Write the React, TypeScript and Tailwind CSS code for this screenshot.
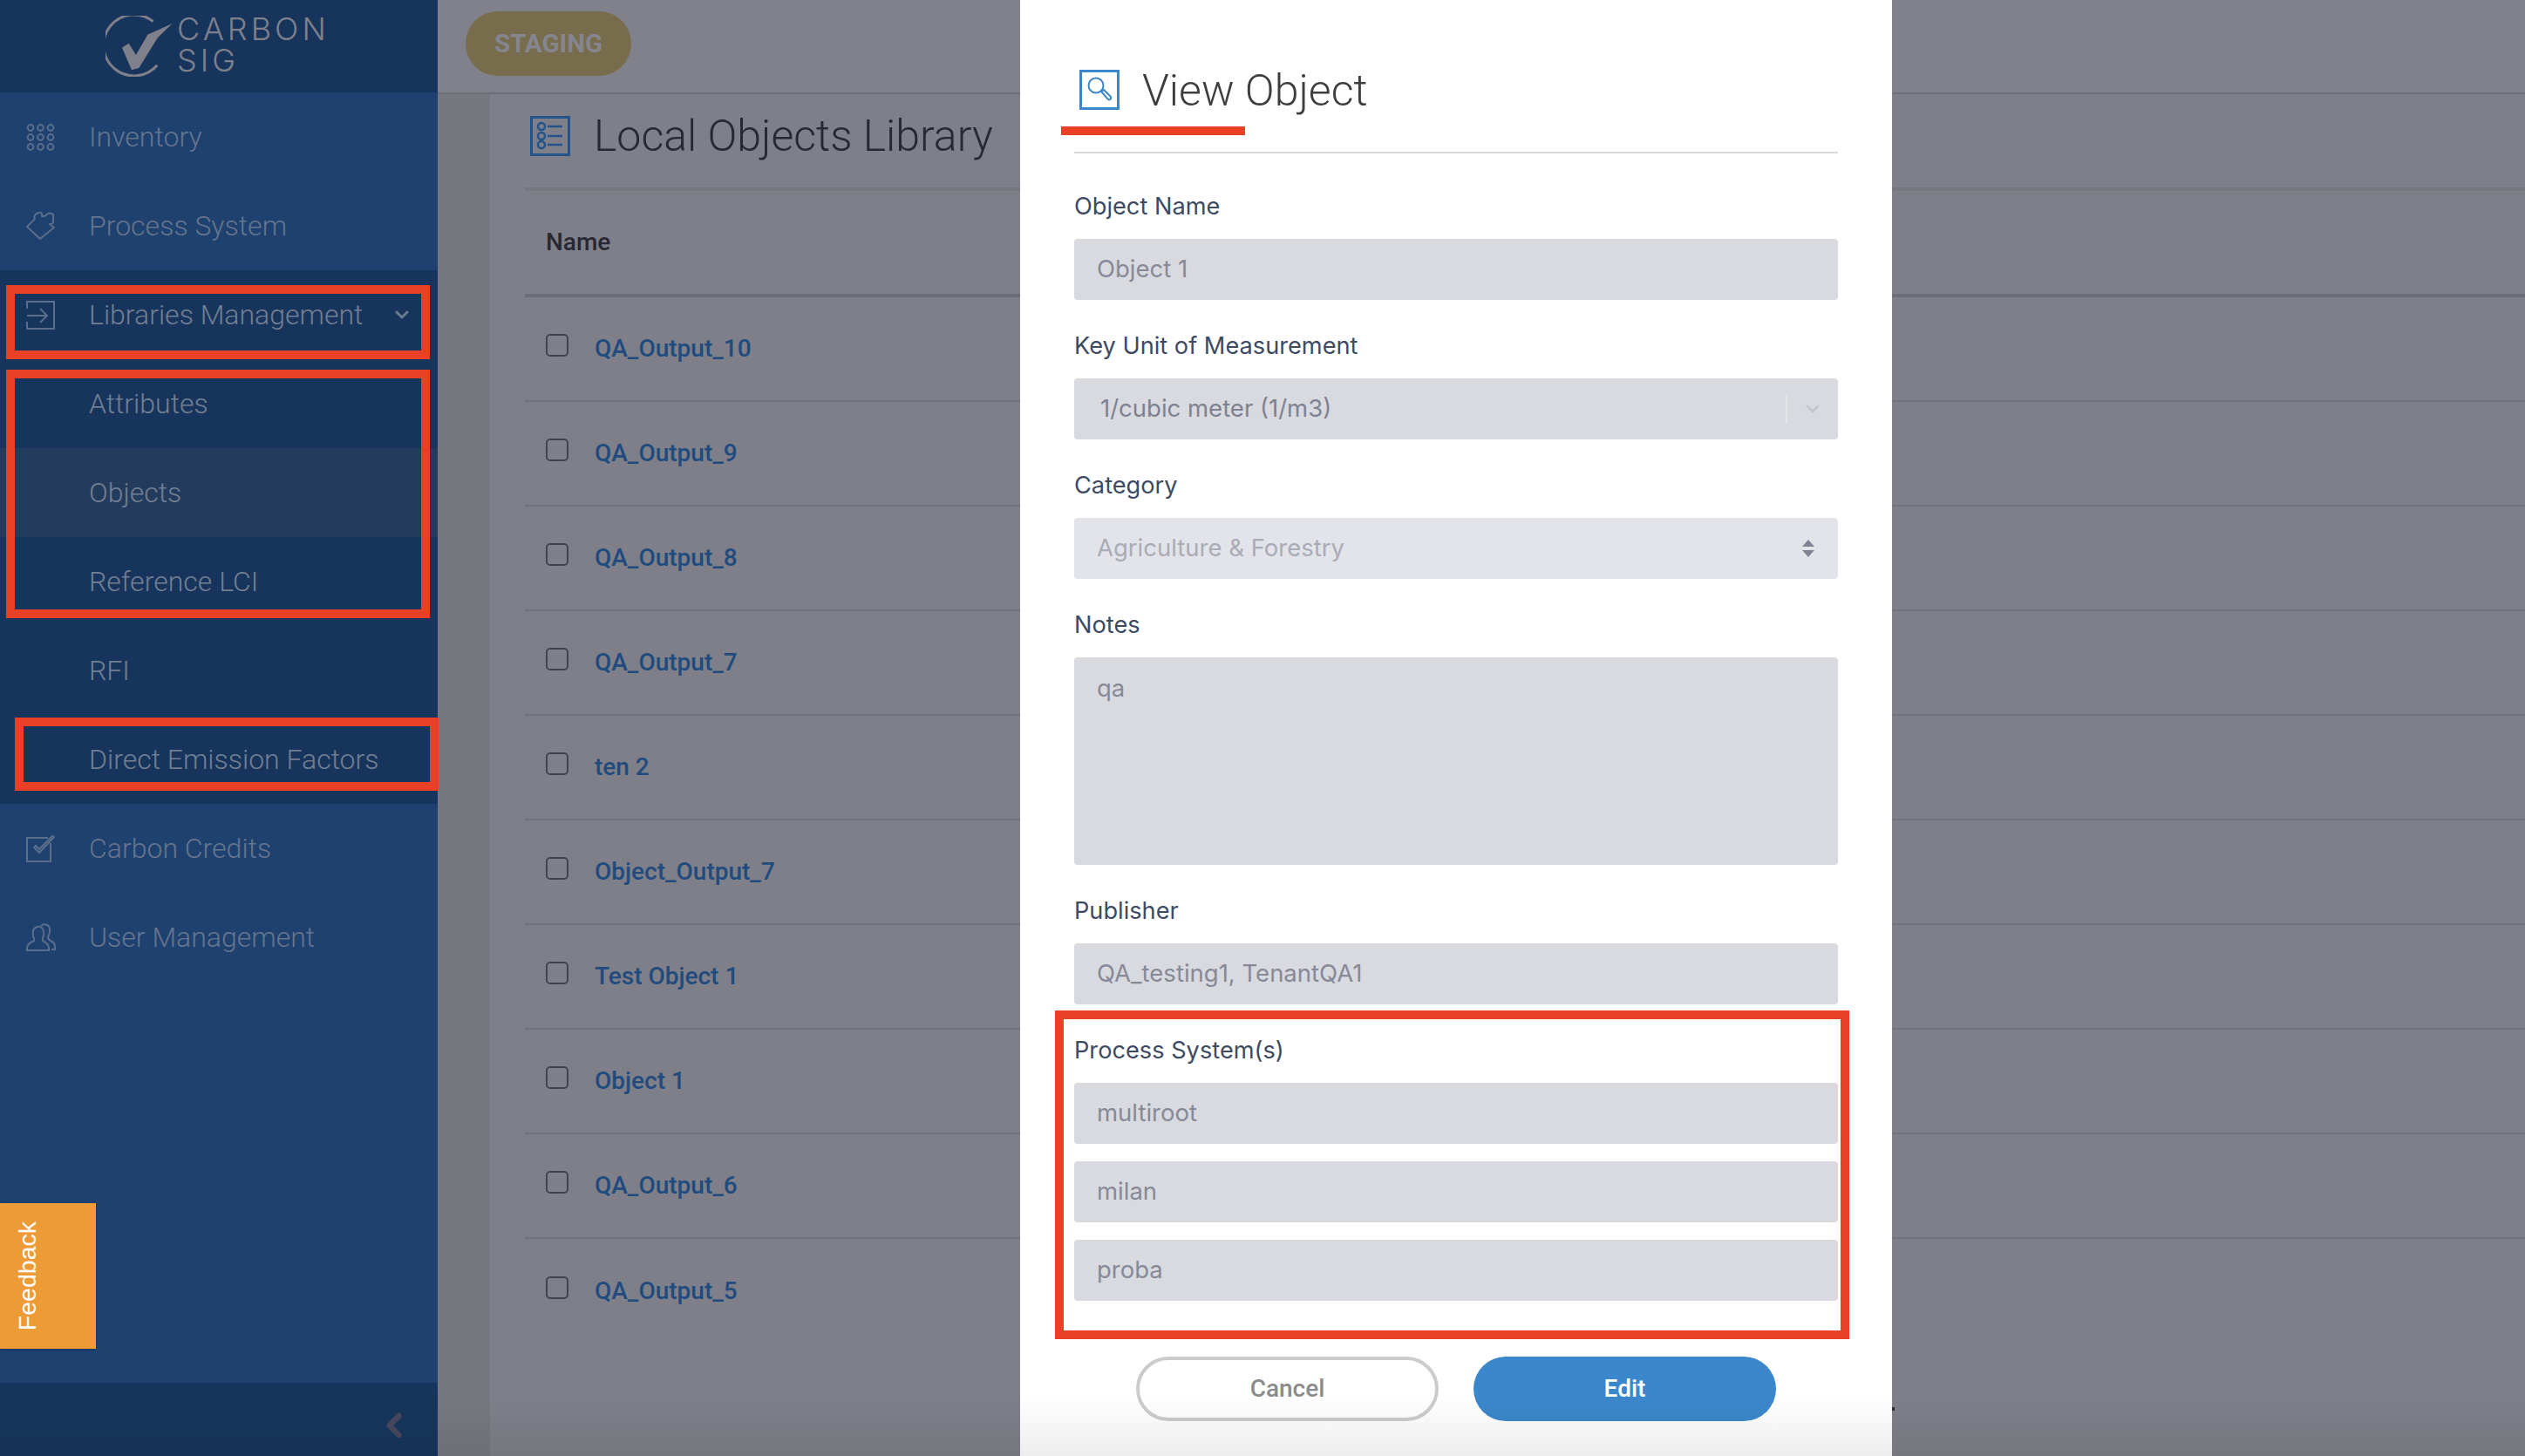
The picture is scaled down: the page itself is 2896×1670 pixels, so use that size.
import { ChevronDown, ChevronLeft } from 'lucide-react';

const RedBox = ({ className }: { className: string }) => (
  <div className={`pointer-events-none absolute border-[10px] border-[#ea4025] ${className}`} />
);

const GridIcon = () => (
  <svg width="33" height="31" viewBox="0 0 33 31" fill="none" stroke="#5a6d8b" strokeWidth="2">
    {[5, 16.5, 28].map((x) =>
      [4.5, 15.5, 26.5].map((y) => <circle key={`${x}-${y}`} cx={x} cy={y} r="3.4" />),
    )}
  </svg>
);

const PuzzleIcon = () => (
  <svg width="34" height="32" viewBox="0 0 34 32" fill="none" stroke="#5a6d8b" strokeWidth="2" strokeLinejoin="round">
    <path d="M1 17 10 8c-2-3 1-6 4-7 3-1 5 1 4 4 3 1 5-1 7-3 2-1 5 0 6 1v8c0 2-2 3-4 3l5 4-16 13z" />
  </svg>
);

const LoginIcon = () => (
  <svg width="33" height="33" viewBox="0 0 33 33" fill="none" stroke="#5a6d8b" strokeWidth="2">
    <path d="M1 9V1h31v31H1v-8" />
    <path d="M1 17h22M16 9l8 8-8 8" />
  </svg>
);

const CheckIcon = () => (
  <svg width="33" height="33" viewBox="0 0 33 33" fill="none" stroke="#5a6d8b" strokeWidth="2">
    <path d="M28 10v21H1V4h24" />
    <path d="m9 15 6 6L32 3l-2-1-15 15-4-4z" />
  </svg>
);

const UsersIcon = () => (
  <svg width="34" height="33" viewBox="0 0 34 33" fill="none" stroke="#5a6d8b" strokeWidth="2">
    <path d="M1 31v-3c0-4 4-6 8-8 1-2 0-3-1-5-1-5 0-10 5-11s8 3 7 10c-1 3-2 4-1 6 4 2 7 4 7 8v3z" />
    <path d="M17 3c3-3 9-2 10 3 1 4-1 7-2 10 0 2 1 3 3 4s5 3 5 6v4h-4" />
  </svg>
);

const navTop = [
  { label: 'Inventory', icon: <GridIcon /> },
  { label: 'Process System', icon: <PuzzleIcon /> },
];
const subItems = ['Attributes', 'Objects', 'Reference LCI', 'RFI', 'Direct Emission Factors'];
const navBottom = [
  { label: 'Carbon Credits', icon: <CheckIcon /> },
  { label: 'User Management', icon: <UsersIcon /> },
];
const rows = [
  'QA_Output_10',
  'QA_Output_9',
  'QA_Output_8',
  'QA_Output_7',
  'ten 2',
  'Object_Output_7',
  'Test Object 1',
  'Object 1',
  'QA_Output_6',
  'QA_Output_5',
];

const Sidebar = () => (
  <aside className="relative flex w-[502px] shrink-0 flex-col bg-[#1e416f] font-light">
    <div className="flex h-[106px] shrink-0 items-center bg-[#17355c] pl-[121px]">
      <svg width="80" height="70" viewBox="60 45 240 210" fill="none">
        <path d="M224 65A105 105 0 1 0 238 215" stroke="#7f808c" strokeWidth="9" />
        <path d="M117 155 140 140 165 180 205 110 290 72 240 120 175 225 150 232z" fill="#7f808c" />
      </svg>
      <div className="mt-[-5px] ml-[2px] text-[36px] leading-[36px] font-light tracking-[4px] text-[#7f808c] font-['Inter']">
        <div>CARBON</div>
        <div>SIG</div>
      </div>
    </div>
    {navTop.map((item) => (
      <div key={item.label} className="flex h-[102px] shrink-0 items-center pl-[30px] text-[32px] text-[#66758d]">
        <span className="flex w-[72px] shrink-0">{item.icon}</span>
        {item.label}
      </div>
    ))}
    <div className="shrink-0 bg-[#17355c] text-[32px] text-[#737f92]">
      <div className="flex h-[102px] items-center pl-[30px]">
        <span className="flex w-[72px] shrink-0">
          <LoginIcon />
        </span>
        Libraries Management
        <ChevronDown className="absolute left-[449px] h-[24px] w-[24px] text-[#6c7a90]" strokeWidth={3} />
      </div>
      {subItems.map((label) => (
        <div
          key={label}
          className={`flex h-[102px] items-center pl-[102px] ${label === 'Objects' ? 'bg-[#233c5d]' : ''}`}
        >
          {label}
        </div>
      ))}
    </div>
    {navBottom.map((item) => (
      <div key={item.label} className="flex h-[102px] shrink-0 items-center pl-[30px] text-[32px] text-[#66758d]">
        <span className="flex w-[72px] shrink-0">{item.icon}</span>
        {item.label}
      </div>
    ))}
    <div className="flex-1" />
    <div className="flex h-[84px] shrink-0 items-center justify-end bg-[#17355c] pt-[14px] pr-[28px]">
      <ChevronLeft className="h-[44px] w-[44px] text-[#474a60]" strokeWidth={3.5} />
    </div>

    <div className="absolute top-[1380px] left-0 flex h-[167px] w-[110px] items-center bg-[#ed9b37] pl-[14px] text-[28.5px] font-normal text-white shadow-sm font-['Liberation_Sans']">
      <span className="rotate-180 leading-[34px] [writing-mode:vertical-rl]">Feedback</span>
    </div>

    <RedBox className="top-[327px] left-[7px] h-[85px] w-[486px]" />
    <RedBox className="top-[424px] left-[7px] h-[285px] w-[486px]" />
    <RedBox className="top-[823px] left-[17px] h-[84px] w-[486px]" />
  </aside>
);

const Table = () => (
  <main className="flex min-w-0 flex-1 flex-col">
    <div className="flex h-[108px] shrink-0 items-start border-b-2 border-[#6e6e79] bg-[#81818b] pt-[13px] pl-[32px]">
      <span className="flex h-[74px] w-[190px] items-center justify-center rounded-[37px] bg-[#776d4c] text-[29.5px] font-bold text-[#85858e]">
        STAGING
      </span>
    </div>
    <div className="flex min-h-0 flex-1">
      <div className="w-[60px] shrink-0 bg-[#777780]" />
      <div className="min-w-0 flex-1 bg-[#7f7f89] pl-[40px]">
        <div className="flex h-[111px] items-start border-b-4 border-[#777780] pt-[25px] pl-[6px]">
          <svg width="46" height="46" viewBox="0 0 46 46" fill="none" stroke="#22538a" strokeWidth="2.500">
            <rect x="1.500" y="1.500" width="43" height="43" strokeWidth="3" />
            <circle cx="13" cy="12" r="4" />
            <circle cx="13" cy="23" r="4" />
            <circle cx="13" cy="33" r="4" />
            <path d="M20 12h17M20 23h17M20 33h17" />
          </svg>
          <h1 className="ml-[27px] text-[50px] leading-[46px] font-light text-[#272832]">Local Objects Library</h1>
        </div>
        <div className="flex h-[122px] items-center border-b-4 border-[#6e6e79] pl-[24px] text-[28px] font-medium text-[#272832]">
          Name
        </div>
        {rows.map((name, i) => (
          <div
            key={name}
            className={`flex h-[120px] items-center pl-[24px] ${i < rows.length - 1 ? 'border-b-2 border-[#71717c]' : ''}`}
          >
            <span className="mb-[8px] h-[26px] w-[26px] rounded-[5px] border-2 border-[#43434e]" />
            <span className="ml-[30px] text-[28px] font-medium text-[#1f4b7e]">{name}</span>
          </div>
        ))}
      </div>
    </div>
  </main>
);

const Label = ({ children }: { children: string }) => (
  <label className="mb-[19px] flex h-[36px] items-center text-[27.2px] text-[#3d4a63]">{children}</label>
);

const ReadOnly = ({ children, className = '' }: { children: string; className?: string }) => (
  <div className={`flex h-[70px] items-center rounded-[4px] bg-[#d9dadf] px-[26px] text-[27.5px] text-[#858998] ${className}`}>
    {children}
  </div>
);

const Modal = () => (
  <div className="absolute top-0 left-[1170px] h-full w-[1000px] bg-white px-[62px] font-['Inter']">
    <div className="relative flex border-b-2 border-[#d9d9df] pt-[80px] pb-[48px] pl-[6px] font-['Roboto']">
      <svg width="46" height="46" viewBox="0 0 46 46" fill="none" stroke="#3b87cb">
        <rect x="1.500" y="1.500" width="43" height="43" strokeWidth="3" />
        <circle cx="19" cy="18" r="8.500" strokeWidth="2" />
        <path d="m25 25 3-2 8 8c1 3-2 4-3 3z" strokeWidth="2" />
      </svg>
      <h2 className="ml-[26px] h-[46px] text-[50px] leading-[48px] font-light text-[#3e3e3e]">View Object</h2>
      <div className="absolute top-[145px] left-[-15px] h-[10px] w-[211px] bg-[#ea4025]" />
    </div>

    <div className="mt-[43px]">
      <Label>Object Name</Label>
      <ReadOnly>Object 1</ReadOnly>
    </div>
    <div className="mt-[35px]">
      <Label>Key Unit of Measurement</Label>
      <div className="flex h-[70px] items-center rounded-[4px] bg-[#d9dadf] pl-[30px] text-[27.5px] text-[#7d8292]">
        <span className="flex-1">1/cubic meter (1/m3)</span>
        <span className="h-[34px] w-[2px] bg-[#e4e5e9]" />
        <ChevronDown className="mx-[17px] h-[24px] w-[24px] text-[#c4c6cc]" strokeWidth={2.5} />
      </div>
    </div>
    <div className="mt-[35px]">
      <Label>Category</Label>
      <div className="flex h-[70px] items-center justify-between rounded-[4px] bg-[#e3e4e9] pr-[27px] pl-[26px] text-[27.5px] text-[#a9abb6]">
        Agriculture &amp; Forestry
        <svg width="14" height="20" viewBox="0 0 14 20" fill="#7f8493">
          <path d="M7 0l7 8H0zM7 20l7-8H0z" />
        </svg>
      </div>
    </div>
    <div className="mt-[35px]">
      <Label>Notes</Label>
      <div className="h-[238px] rounded-[4px] bg-[#d9dadf] px-[26px] pt-[15px] text-[27.5px] text-[#858998]">qa</div>
    </div>
    <div className="mt-[35px]">
      <Label>Publisher</Label>
      <ReadOnly>QA_testing1, TenantQA1</ReadOnly>
    </div>
    <div className="relative mt-[35px]">
      <Label>Process System(s)</Label>
      <div className="flex flex-col gap-[20px]">
        <ReadOnly>multiroot</ReadOnly>
        <ReadOnly>milan</ReadOnly>
        <ReadOnly>proba</ReadOnly>
      </div>
      <RedBox className="top-[-28px] left-[-22px] h-[377px] w-[911px]" />
    </div>

    <div className="mt-[64px] flex justify-center gap-[40px] font-['Roboto'] text-[28px] font-medium">
      <button className="h-[74px] w-[347px] rounded-[37px] border-4 border-[#cccccc] bg-white text-[#8b8b8b]">Cancel</button>
      <button className="h-[74px] w-[347px] rounded-[37px] bg-[#3b87cb] text-white">Edit</button>
    </div>
  </div>
);

export default function App() {
  return (
    <div className="relative flex h-[1670px] w-[2896px] overflow-hidden font-['Roboto',sans-serif]">
      <Sidebar />
      <Table />
      <Modal />
      <div className="absolute top-[1614px] left-[2170px] h-[4px] w-[3px] bg-[#2c2c36]" />
      <div className="pointer-events-none absolute right-0 bottom-0 left-0 h-[70px] bg-gradient-to-b from-transparent to-black/[0.07]" />
    </div>
  );
}
